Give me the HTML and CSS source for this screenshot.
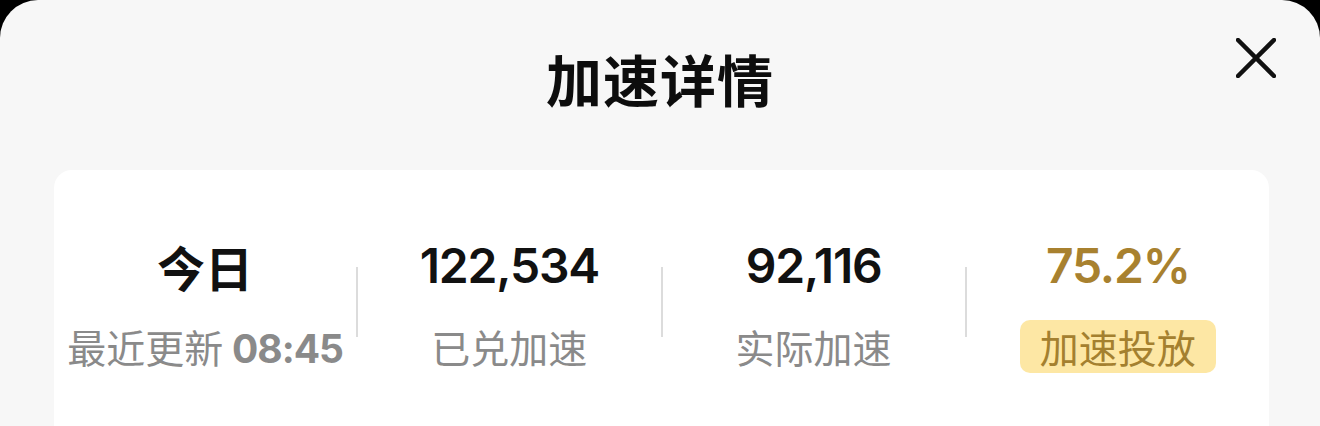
FILE: index.html
```html
<!DOCTYPE html>
<html lang="zh-CN">
<head>
<meta charset="utf-8">
<title>加速详情</title>
<link rel="stylesheet" href="styles.css">
</head>
<body>
<div class="sheet">
  <header class="header">
    <div class="spacer"></div>
    <h1 class="title">加速详情</h1>
    <button class="close" aria-label="关闭">
      <svg viewBox="0 0 40 40" width="40" height="40"><path d="M2 2L38 38M38 2L2 38" stroke="#111" stroke-width="4.5" stroke-linecap="round" fill="none"/></svg>
    </button>
  </header>
  <section class="card">
    <div class="stats">
      <div class="stat">
        <div class="value cjk">今日</div>
        <div class="label">最近更新 <b class="time">08:45</b></div>
      </div>
      <div class="divider"></div>
      <div class="stat">
        <div class="value">122,534</div>
        <div class="label">已兑加速</div>
      </div>
      <div class="divider"></div>
      <div class="stat">
        <div class="value">92,116</div>
        <div class="label">实际加速</div>
      </div>
      <div class="divider"></div>
      <div class="stat">
        <div class="value gold">75.2%</div>
        <div class="label badge">加速投放</div>
      </div>
    </div>
  </section>
</div>
</body>
</html>
```
FILE: styles.css
```css
* { box-sizing: border-box; }
html, body {
  margin: 0;
  padding: 0;
  width: 1320px;
  height: 426px;
  overflow: hidden;
  background: #000;
  font-family: Inter, "Noto Sans CJK SC", sans-serif;
}
.sheet {
  height: 426px;
  background: #f7f7f7;
  border-radius: 38px 38px 0 0;
  overflow: hidden;
}
.header {
  height: 154px;
  display: grid;
  grid-template-columns: 1fr auto 1fr;
  align-items: center;
}
.title {
  margin: 0;
  font-family: "Noto Sans CJK SC", sans-serif;
  font-size: 56px;
  font-weight: 700;
  color: #0d0d0d;
  letter-spacing: 1px;
}
.close {
  justify-self: end;
  align-self: start;
  margin: 38px 44px 0 0;
  padding: 0;
  border: 0;
  background: none;
  width: 40px;
  height: 40px;
  display: block;
}
.close svg { display: block; }
.card {
  margin: 16px 51px 0 54px;
  height: 320px;
  background: #fff;
  border-radius: 18px;
  padding-top: 67px;
}
.stats {
  display: flex;
  align-items: flex-start;
}
.stat {
  flex: 1;
  display: flex;
  flex-direction: column;
  align-items: center;
}
.divider {
  width: 2px;
  height: 70px;
  margin-top: 30px;
  background: #dcdcdc;
}
.value {
  font-size: 48px;
  font-weight: 600;
  line-height: 58px;
  color: #111;
  letter-spacing: -1.2px;
}
.value.cjk {
  font-family: "Noto Sans CJK SC", sans-serif;
  font-weight: 700;
  letter-spacing: 0;
}
.value.gold { color: #a8812f; }
.label {
  margin-top: 25px;
  height: 53px;
  line-height: 53px;
  font-family: "Noto Sans CJK SC", sans-serif;
  font-size: 39px;
  color: #8a8a8a;
}
.time {
  font-family: Inter, sans-serif;
  font-weight: 700;
  letter-spacing: -1px;
}
.badge {
  padding: 0 20px;
  background: #fde7a4;
  color: #a4802f;
  border-radius: 10px;
}
```
